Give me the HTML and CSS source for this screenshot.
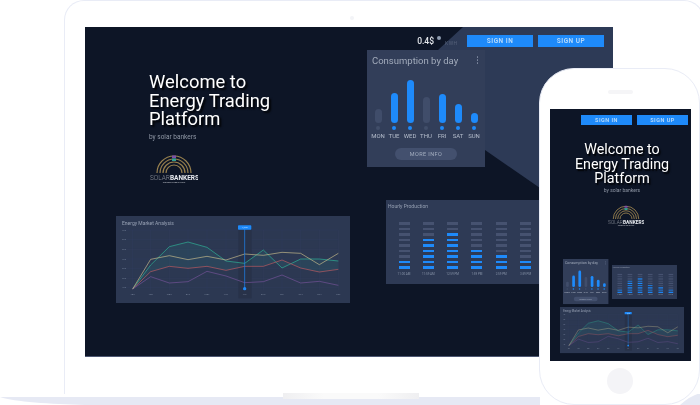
FILE: index.html
```html
<!DOCTYPE html>
<html lang="en">
<head>
<meta charset="utf-8">
<title>Energy Trading Platform</title>
<link rel="stylesheet" href="styles.css">
</head>
<body>
<svg class="defs" width="0" height="0" aria-hidden="true">
  <symbol id="logo" viewBox="0 0 48 28">
    <g fill="none" stroke="#97804e">
      <path d="M7 18a17 17 0 0 1 34 0" stroke-width="1.2"/>
      <path d="M10 18a14 14 0 0 1 28 0" stroke-width="1.2"/>
      <path d="M13 18a11 11 0 0 1 22 0" stroke-width="1.2"/>
      <path d="M16 18a8 8 0 0 1 16 0" stroke-width="1.2"/>
    </g>
    <rect x="22" y="0.500" width="4" height="2.500" fill="#7a4fa8"/>
    <rect x="22" y="3.500" width="4" height="2.500" fill="#2c9f96"/>
    <text x="0" y="24.500" class="logo-a">SOLAR<tspan class="logo-b">BANKERS</tspan></text>
    <text x="24" y="27.500" class="logo-c" text-anchor="middle">THE BRIGHT SIDE OF LIGHT</text>
  </symbol>
  <symbol id="market" viewBox="18 18 702 261">
    <g stroke="#354160" stroke-width="1">
      <path d="M42 60H685M42 89H685M42 118H685M42 147H685M42 176H685M42 205H685M42 233H685"/>
      <path d="M68 60V240M122 60V240M178 60V240M234 60V240M291 60V240M348 60V240M460 60V240M516 60V240M572 60V240M628 60V240M685 60V240"/>
    </g>
    <rect x="385" y="45" width="40" height="220" fill="#283249"/>
    <path d="M68 237L122 165 178 110 234 96 291 112 348 153 404 160 460 120 516 174 572 147 628 147 685 153 685 178 628 186 572 174 516 150 460 169 404 169 348 181 291 169 234 175 178 169 122 185Z" fill="#2a9d8f" fill-opacity=".13"/>
    <g fill="none" stroke-width="2">
      <path stroke="#2fb598" d="M68 237L122 165 178 110 234 96 291 112 348 153 404 160 460 120 516 174 572 147 628 147 685 153"/>
      <path stroke="#c05c62" d="M68 237L122 185 178 169 234 175 291 169 348 181 404 169 460 169 516 150 572 174 628 186 685 178"/>
      <path stroke="#75539a" d="M68 237L122 200 178 219 234 215 291 184 348 198 404 218 460 215 516 195 572 219 628 214 685 226"/>
      <path stroke="#c9bd8c" d="M68 237L122 148 178 137 234 149 291 139 348 150 404 132 460 136 516 127 572 130 628 164 685 130"/>
    </g>
    <g class="chart-label">
      <text x="42" y="62">700</text><text x="42" y="91">600</text><text x="42" y="120">500</text><text x="42" y="149">400</text><text x="42" y="178">300</text><text x="42" y="207">200</text><text x="42" y="235">100</text>
      <text x="68" y="256">JAN</text><text x="122" y="256">FEB</text><text x="178" y="256">MAR</text><text x="234" y="256">APR</text><text x="291" y="256">MAY</text><text x="348" y="256">JUN</text><text x="404" y="256">JUL</text><text x="460" y="256">AUG</text><text x="516" y="256">SEP</text><text x="572" y="256">OCT</text><text x="628" y="256">NOV</text><text x="685" y="256">DEC</text>
    </g>
    <path d="M404 55V236" stroke="#1e8afa" stroke-width="2"/>
    <circle cx="404" cy="236" r="5" fill="#1e8afa"/>
    <rect x="384" y="46" width="40" height="13" rx="2" fill="#1e8afa"/>
    <text x="404" y="55" class="chart-tag" text-anchor="middle">1,240</text>
  </symbol>
</svg>

<main class="stage">
  <svg class="base" viewBox="0 0 700 405" width="700" height="405" aria-hidden="true">
    <path d="M0 397H540V405H85C50 404 15 402 0 397Z" fill="#e6e9f4"/>
    <path d="M680 405Q690 396 700 393V405Z" fill="#e6e9f4"/>
  </svg>

  <section class="laptop">
    <span class="camera"></span>
    <div class="screen">
      <svg class="wedge" viewBox="0 0 528 329" width="528" height="329" aria-hidden="true">
        <path d="M378 0H528V329L455 161 400 123 282 23H353Z" fill="#2d3a56"/>
      </svg>
      <header class="topbar">
        <span class="price">0.4$</span><span class="info"></span><span class="unit">KWH</span>
        <a class="btn">SIGN IN</a><a class="btn">SIGN UP</a>
      </header>
      <div class="hero">
        <h1 class="title">Welcome to<br>Energy Trading<br>Platform</h1>
        <p class="by">by solar bankers</p>
        <svg class="logo"><use href="#logo"/></svg>
      </div>

      <article class="card consumption at-consumption">
        <div class="card-head"><h2>Consumption by day</h2><span class="kebab"><i></i><i></i><i></i></span></div>
        <div class="days">
          <div class="day off"><span class="track"><b style="height:14px"></b></span><em></em><small>MON</small></div>
          <div class="day"><span class="track"><b style="height:30px"></b></span><em></em><small>TUE</small></div>
          <div class="day"><span class="track"><b style="height:43px"></b></span><em></em><small>WED</small></div>
          <div class="day off"><span class="track"><b style="height:26px"></b></span><em></em><small>THU</small></div>
          <div class="day"><span class="track"><b style="height:29px"></b></span><em></em><small>FRI</small></div>
          <div class="day"><span class="track"><b style="height:19px"></b></span><em></em><small>SAT</small></div>
          <div class="day"><span class="track"><b style="height:10px"></b></span><em></em><small>SUN</small></div>
        </div>
        <a class="more">MORE INFO</a>
      </article>

      <article class="card hourly at-hourly">
        <h3>Hourly Production</h3>
        <div class="hours">
          <div class="hour"><i></i><i></i><i></i><i></i><i></i><i></i><i></i><i class="on"></i><i class="on"></i><small>11:00 AM</small></div>
          <div class="hour"><i></i><i></i><i></i><i class="on"></i><i class="on"></i><i class="on"></i><i class="on"></i><i class="on"></i><i class="on"></i><small>11:59 AM</small></div>
          <div class="hour"><i></i><i></i><i class="on"></i><i class="on"></i><i class="on"></i><i class="on"></i><i class="on"></i><i class="on"></i><i class="on"></i><small>12:59 PM</small></div>
          <div class="hour"><i></i><i></i><i></i><i></i><i></i><i class="on"></i><i class="on"></i><i class="on"></i><i class="on"></i><small>1:59 PM</small></div>
          <div class="hour"><i></i><i></i><i></i><i></i><i></i><i></i><i class="on"></i><i class="on"></i><i class="on"></i><small>2:59 PM</small></div>
          <div class="hour"><i></i><i></i><i></i><i></i><i></i><i></i><i></i><i class="on"></i><i class="on"></i><small>3:59 PM</small></div>
        </div>
      </article>

      <article class="card market at-market">
        <h3>Energy Market Analysis</h3>
        <svg class="market-svg"><use href="#market"/></svg>
      </article>
    </div>
    <span class="notch"></span>
  </section>

  <section class="phone">
    <span class="speaker"></span>
    <div class="phone-screen">
      <header class="phone-bar"><a class="btn phone-btn">SIGN IN</a><a class="btn phone-btn">SIGN UP</a></header>
      <div class="phone-hero">
        <h1 class="title phone-title">Welcome to<br>Energy Trading<br>Platform</h1>
        <p class="by phone-by">by solar bankers</p>
        <svg class="phone-logo"><use href="#logo"/></svg>
      </div>

      <article class="card consumption ph-consumption">
        <div class="card-head"><h2>Consumption by day</h2><span class="kebab"><i></i><i></i><i></i></span></div>
        <div class="days">
          <div class="day off"><span class="track"><b style="height:14px"></b></span><em></em><small>MON</small></div>
          <div class="day"><span class="track"><b style="height:30px"></b></span><em></em><small>TUE</small></div>
          <div class="day"><span class="track"><b style="height:43px"></b></span><em></em><small>WED</small></div>
          <div class="day off"><span class="track"><b style="height:26px"></b></span><em></em><small>THU</small></div>
          <div class="day"><span class="track"><b style="height:29px"></b></span><em></em><small>FRI</small></div>
          <div class="day"><span class="track"><b style="height:19px"></b></span><em></em><small>SAT</small></div>
          <div class="day"><span class="track"><b style="height:10px"></b></span><em></em><small>SUN</small></div>
        </div>
        <a class="more">MORE INFO</a>
      </article>

      <article class="card hourly ph-hourly">
        <h3>Hourly Production</h3>
        <div class="hours">
          <div class="hour"><i></i><i></i><i></i><i></i><i></i><i></i><i></i><i class="on"></i><i class="on"></i><small>11:00 AM</small></div>
          <div class="hour"><i></i><i></i><i></i><i class="on"></i><i class="on"></i><i class="on"></i><i class="on"></i><i class="on"></i><i class="on"></i><small>11:59 AM</small></div>
          <div class="hour"><i></i><i></i><i class="on"></i><i class="on"></i><i class="on"></i><i class="on"></i><i class="on"></i><i class="on"></i><i class="on"></i><small>12:59 PM</small></div>
          <div class="hour"><i></i><i></i><i></i><i></i><i></i><i class="on"></i><i class="on"></i><i class="on"></i><i class="on"></i><small>1:59 PM</small></div>
          <div class="hour"><i></i><i></i><i></i><i></i><i></i><i></i><i class="on"></i><i class="on"></i><i class="on"></i><small>2:59 PM</small></div>
          <div class="hour"><i></i><i></i><i></i><i></i><i></i><i></i><i></i><i class="on"></i><i class="on"></i><small>3:59 PM</small></div>
        </div>
      </article>

      <article class="card market ph-market">
        <h3>Energy Market Analysis</h3>
        <svg class="market-svg"><use href="#market"/></svg>
      </article>
    </div>
    <span class="home"></span>
  </section>
</main>
</body>
</html>
```

FILE: styles.css
```css
* { box-sizing: border-box; }
html, body { margin: 0; padding: 0; background: #fff; }
body { font-family: Roboto, "Liberation Sans", sans-serif; }
.defs { position: absolute; }

.stage { position: relative; width: 700px; height: 405px; overflow: hidden; background: #fff; }
.base { position: absolute; left: 0; top: 0; }

/* laptop */
.laptop {
  position: absolute; left: 64px; top: 0; width: 640px; height: 394px;
  background: #fff; border: 1px solid #e9ecf6; border-bottom: 0; border-radius: 20px 20px 0 0;
  padding: 26px 0 0 20px;
}
.camera { position: absolute; left: 285px; top: 15px; width: 4px; height: 4px; border-radius: 50%; background: #f3f4f7; }
.notch {
  position: absolute; left: 218px; top: 392px; width: 136px; height: 6px;
  background: linear-gradient(90deg, #efeff1, #fafafa 30%, #fafafa 70%, #efeff1);
}
.screen {
  position: relative; width: 528px; height: 330px; background: #0d1526;
  border-bottom: 1px solid #4d5772; filter: blur(.5px);
}
.wedge { position: absolute; left: 0; top: 0; }

.topbar {
  position: relative; display: flex; align-items: center; justify-content: flex-end;
  height: 12px; padding: 0 9px 0 0; top: 8px;
}
.price { color: #e6e9ee; font-size: 8.500px; font-weight: 500; line-height: 12px; }
.info { width: 4px; height: 4px; border-radius: 50%; background: #8e9cb0; margin: -6px 4px 0 3px; }
.unit { width: 15px; color: #55617a; font-size: 5px; margin-right: 7px; letter-spacing: .5px; margin-top: 3px; white-space: nowrap; }
.btn {
  display: flex; align-items: center; justify-content: center;
  height: 12px; width: 66px; margin-left: 5px; background: #1e8afa;
  color: #b5d9fb; font-size: 6.500px; font-weight: 700; letter-spacing: .5px;
}
.unit + .btn { margin-left: 0; }

.hero { position: relative; padding: 34px 0 0 64px; }
.title {
  margin: 0; color: #fff; font-size: 18.400px; font-weight: 400; line-height: 18.500px;
  text-shadow: 2px 2px 2px #000;
}
.by { margin: 4px 0 0; color: #8f97a5; font-size: 6.500px; line-height: 8px; }
.logo { display: block; width: 48px; height: 28px; margin: 14px 0 0 1px; }
.logo-a { fill: #8a8f99; font-size: 6.500px; font-family: Roboto, sans-serif; font-weight: 300; }
.logo-b { fill: #e8ebf0; font-weight: 700; }
.logo-c { fill: #aeb2ba; font-size: 1.800px; font-family: Roboto, sans-serif; font-weight: 700; }

/* cards */
.card { position: absolute; background: #2e3a55; transform-origin: 0 0; }
.at-consumption { left: 282px; top: 23px; }
.at-hourly { left: 301px; top: 173px; }
.at-market { left: 31px; top: 189px; }

.consumption {
  width: 118px; height: 117px; background: #323e59; padding: 4px 5px 0 5px;
  display: flex; flex-direction: column; align-items: stretch;
}
.card-head { display: flex; justify-content: space-between; align-items: center; height: 12px; }
.card-head h2 { margin: 0; color: #a2abbb; font-size: 9.500px; font-weight: 400; white-space: nowrap; }
.kebab { display: flex; flex-direction: column; gap: 1.500px; padding-right: 2px; }
.kebab i { width: 1.500px; height: 1.500px; background: #7f8aa0; border-radius: 50%; }

.days { display: flex; justify-content: space-between; margin: 14px 0 0 -1px; width: 110px; }
.day { display: flex; flex-direction: column; align-items: center; width: 14px; }
.track { display: flex; align-items: flex-end; height: 43px; }
.track b { display: block; width: 7px; border-radius: 3.500px; background: #1e8afa; }
.day em { display: block; width: 4px; height: 4px; border-radius: 50%; background: #1e8afa; margin-top: 3px; }
.day small { margin-top: 2px; color: #b4bccb; font-size: 6px; line-height: 7px; white-space: nowrap; }
.off .track b { background: #404d6a; }
.off em { background: #414e6a; }

.more {
  align-self: center; display: flex; align-items: center; justify-content: center;
  width: 62px; height: 12px; margin-top: 9px; border-radius: 6px;
  background: #43506e; color: #a4aec0; font-size: 5.500px; letter-spacing: .4px;
}

.hourly { width: 154px; height: 84px; padding: 3px 2px; }
.hourly h3, .market h3 { margin: 0; color: #97a1b4; font-size: 5px; font-weight: 400; line-height: 6px; }
.hours { display: flex; gap: 13.300px; margin: 13px 0 0 10.500px; }
.hour { display: flex; flex-direction: column; align-items: center; width: 11px; gap: 3px; }
.hour i { display: block; width: 11px; height: 2.500px; background: #465270; }
.hour i.on { background: #1e8afa; }
.hour small { color: #8793a8; font-size: 3px; line-height: 4px; white-space: nowrap; }

.market { width: 234px; height: 87px; background: #2c3852; padding: 4px 6px; }
.market-svg { position: absolute; left: 0; top: 0; width: 234px; height: 87px; }
.market h3 { position: relative; z-index: 1; }
.chart-label text { fill: #6f7b92; font-size: 7px; font-family: Roboto, sans-serif; text-anchor: middle; }
.chart-tag { fill: #cfe6ff; font-size: 7px; font-family: Roboto, sans-serif; }

/* phone */
.phone {
  position: absolute; left: 539px; top: 68px; width: 161px; height: 337px;
  background: #fff; border: 1px solid #e9ecf6; border-radius: 35px;
  padding: 40px 0 0 10px;
}
.speaker { position: absolute; left: 68px; top: 21px; width: 25px; height: 4px; border-radius: 2px; background: #f5f5f7; }
.home { position: absolute; left: 67px; top: 299px; width: 26px; height: 26px; border-radius: 50%; background: #f4f4f7; }
.phone-screen {
  position: relative; width: 141px; height: 252px; background: #0d1526;
  filter: blur(.5px);
}
.phone-bar { display: flex; justify-content: flex-end; padding: 6px 3px 0 0; }
.phone-btn { width: 51px; height: 10px; margin-left: 5px; font-size: 5.500px; }
.phone-hero { display: flex; flex-direction: column; align-items: center; padding-top: 17px; margin-left: 3px; }
.phone-title { font-size: 14.300px; line-height: 14.500px; text-align: center; text-shadow: 1.500px 1.500px 1.500px #000; }
.phone-by { margin: 1px 0 0; font-size: 5px; line-height: 7px; }
.phone-logo { display: block; width: 36px; height: 22px; margin: 11px 0 0 8px; }
.ph-consumption { left: 13px; top: 150px; transform: scale(.385); }
.ph-hourly { left: 62px; top: 156px; transform: scale(.422, .405); }
.ph-market { left: 10px; top: 198px; transform: scale(.53); }
```
